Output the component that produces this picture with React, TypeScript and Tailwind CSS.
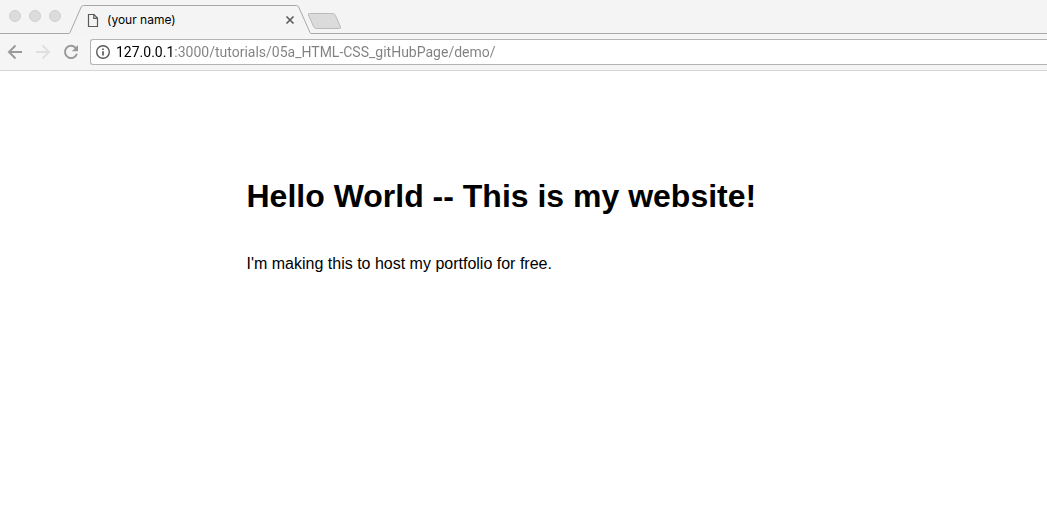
import React from "react";

function WindowControls() {
  return (
    <div className="flex w-[69px] shrink-0 items-start gap-2 border-b border-[#a8a8a8] pt-[10px] pl-[9px]">
      {["Close window", "Minimise window", "Zoom window"].map((label) => (
        <button
          key={label}
          type="button"
          aria-label={label}
          className="size-3 rounded-full border border-[#cfcfcf] bg-[#dcdcdc]"
        />
      ))}
    </div>
  );
}

function PageIcon() {
  return (
    <svg width="12" height="15" viewBox="0 0 12 15" fill="none" stroke="#5a5a5a" strokeWidth="1.2" aria-hidden="true">
      <path d="M1.5 1.5h5.5l3.5 3.5v8.5h-9z" />
      <path d="M6.8 1.5v3.8h3.7" />
    </svg>
  );
}

function Tab() {
  return (
    <div className="relative flex w-[242px] shrink-0 items-center pt-[6px] pr-4 pl-[18px]">
      <svg className="absolute inset-0" width="242" height="34" viewBox="0 0 242 34" fill="none" stroke="#a8a8a8" aria-hidden="true">
        <path d="M0 33.5Q.6 33.5 1 32.5L12.2 7Q13 5.5 14.5 5.5H227.5Q229 5.5 229.7 7L241 32.5Q241.4 33.5 242 33.5" />
      </svg>
      <PageIcon />
      <span className="ml-2 flex-1 font-[Inter,sans-serif] text-xs leading-4 text-black">(your name)</span>
      <button type="button" aria-label="Close tab" className="relative">
        <svg width="10" height="10" viewBox="0 0 10 10" fill="none" stroke="#5a5a5a" strokeWidth="1.6" aria-hidden="true">
          <path d="M1.5 1.5l7 7M8.5 1.5l-7 7" />
        </svg>
      </button>
    </div>
  );
}

function NewTab() {
  return (
    <div className="flex flex-1 items-start border-b border-[#a8a8a8] pt-3">
      <button type="button" aria-label="New tab" className="-ml-1">
        <svg width="35" height="18" viewBox="0 0 35 18" fill="#dbdbdb" stroke="#bababa" aria-hidden="true">
          <path d="M2.5 1.5H25.5Q27.5 1.5 28.3 3.2L33.5 15Q34 16.5 32.5 16.5H9.5Q7.5 16.5 6.7 14.8L1.4 3Q.8 1.5 2.5 1.5Z" />
        </svg>
      </button>
    </div>
  );
}

function Toolbar() {
  return (
    <div className="flex h-[37px] items-center border-b border-[#d6d6d6] bg-[#f5f5f5] pl-[7px]">
      <button type="button" aria-label="Back">
        <svg width="16" height="16" viewBox="0 0 16 16" fill="none" stroke="#9a9a9a" strokeWidth="2" aria-hidden="true">
          <path d="M15 8H2.5M8.5 1.5L2 8l6.5 6.5" />
        </svg>
      </button>
      <button type="button" aria-label="Forward" disabled className="ml-3">
        <svg width="16" height="16" viewBox="0 0 16 16" fill="none" stroke="#e0e0e0" strokeWidth="2" aria-hidden="true">
          <path d="M1 8h12.5M7.5 1.5L14 8l-6.5 6.5" />
        </svg>
      </button>
      <button type="button" aria-label="Reload" className="ml-3">
        <svg width="16" height="16" viewBox="0 0 16 16" fill="none" aria-hidden="true">
          <path d="M12.6 3.8A6.1 6.1 0 1 0 13.9 9.8" stroke="#9a9a9a" strokeWidth="2" />
          <path d="M15 1v6.2H8.8z" fill="#9a9a9a" />
        </svg>
      </button>
      <form className="ml-[11px] flex h-[26px] flex-1 items-center rounded-l-[3px] border border-r-0 border-[#b4b4b4] bg-white pl-1" onSubmit={(e) => e.preventDefault()}>
        <button type="button" aria-label="View site information">
          <svg width="16" height="16" viewBox="0 0 16 16" fill="none" stroke="#5a5a5a" aria-hidden="true">
            <circle cx="8" cy="8" r="6.3" strokeWidth="1.4" />
            <path d="M8 7.2v4.3M8 4.4v1.6" strokeWidth="1.7" />
          </svg>
        </button>
        <input
          type="text"
          aria-label="Address"
          spellCheck={false}
          defaultValue="127.0.0.1:3000/tutorials/05a_HTML-CSS_gitHubPage/demo/"
          className="ml-[5px] min-w-0 flex-1 bg-[linear-gradient(to_right,#000_58px,#808080_58px)] bg-clip-text font-[Roboto,sans-serif] text-sm leading-5 text-transparent caret-black outline-none"
        />
      </form>
    </div>
  );
}

export default function App() {
  return (
    <div className="min-h-screen bg-white">
      <header>
        <div className="flex h-[34px] bg-[#f4f4f4]">
          <WindowControls />
          <Tab />
          <NewTab />
        </div>
        <Toolbar />
      </header>
      <main className="mx-auto max-w-[554px] pt-[107px] font-['Liberation_Sans',Arial,sans-serif] text-black">
        <h1 className="text-[32px] leading-9 font-bold whitespace-nowrap">Hello World -- This is my website!</h1>
        <p className="mt-10 text-base leading-5">I'm making this to host my portfolio for free.</p>
      </main>
    </div>
  );
}
